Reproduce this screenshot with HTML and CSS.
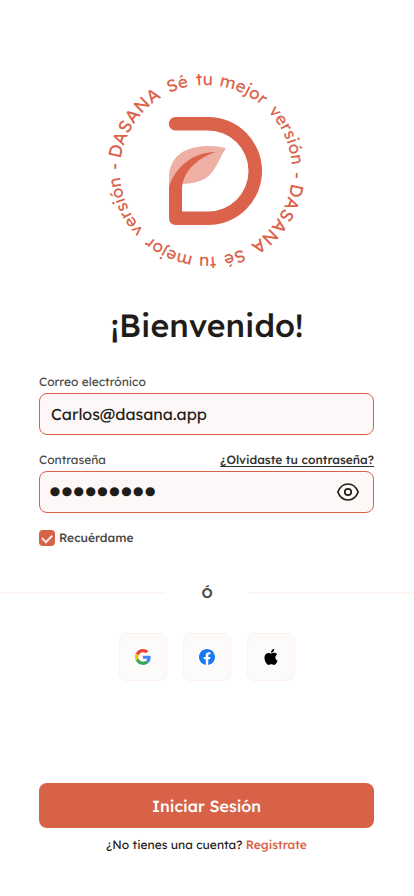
FILE: index.html
```html
<!DOCTYPE html>
<html lang="es">
<head>
<meta charset="utf-8">
<meta name="viewport" content="width=device-width, initial-scale=1">
<title>Dasana</title>
<link rel="stylesheet" href="styles.css">
</head>
<body>
<main class="page">
  <svg class="logo" viewBox="1 0 200 200" role="img" aria-label="Dasana">
    <defs>
      <path id="ring" d="M14 100A86 86 0 0 1 186 100"/>
      <g id="motto">
        <text><textPath href="#ring" startOffset="1">-</textPath></text>
        <text class="brand"><textPath href="#ring" startOffset="12">DASANA</textPath></text>
        <text><textPath href="#ring" startOffset="97">Sé</textPath></text>
        <text><textPath href="#ring" startOffset="125">tu</textPath></text>
        <text><textPath href="#ring" startOffset="148">mejor</textPath></text>
        <text><textPath href="#ring" startOffset="204">versión</textPath></text>
      </g>
    </defs>
    <use href="#motto"/>
    <use href="#motto" transform="rotate(180 100 100)"/>
    <path class="leaf" d="M63 116V104C65 84 80 75 103 75C110 75 116 76 119 77Q120 78 119 79C115 84 113 91 109 97C103 108 93 112 76 113Z"/>
    <path class="letter" d="M69.500 46H102A54 54 0 0 1 102 154H70Q63 154 63 147V116C69 97 86 81 110 81C91 87 76 101 76 119V139.500Q76 140.500 77 140.500H102A40.500 40.500 0 0 0 102 59.500H69.500A6.750 6.750 0 0 1 69.500 46Z"/>
  </svg>

  <h1 class="title">¡Bienvenido!</h1>

  <form class="form" id="login">
    <div class="field">
      <label class="label" for="email">Correo electrónico</label>
      <input class="input" id="email" type="email" value="Carlos@dasana.app">
    </div>
    <div class="field">
      <div class="row">
        <label class="label" for="password">Contraseña</label>
        <a class="forgot" href="#">¿Olvidaste tu contraseña?</a>
      </div>
      <div class="input secret">
        <input class="password" id="password" type="password" value="contrasen">
        <button class="reveal" type="button" aria-label="Mostrar contraseña">
          <svg viewBox="0 0 24 24" width="24" height="24"><path d="M1.800 12C4 6.500 8 4 12 4s8 2.500 10.200 8C20 17.500 16 20 12 20S4 17.500 1.800 12Z"/><circle cx="12" cy="12" r="3.200"/></svg>
        </button>
      </div>
    </div>
    <label class="remember"><input class="check" type="checkbox" checked>Recuérdame</label>
  </form>

  <div class="divider">Ó</div>

  <div class="social">
    <button class="provider" type="button" aria-label="Google">
      <svg viewBox="0 0 48 48" width="16" height="16"><path fill="#EA4335" d="M24 9.500c3.540 0 6.710 1.220 9.210 3.600l6.850-6.850C35.900 2.380 30.470 0 24 0 14.620 0 6.510 5.380 2.560 13.220l7.980 6.190C12.430 13.720 17.740 9.500 24 9.500z"/><path fill="#4285F4" d="M46.980 24.550c0-1.570-.15-3.090-.38-4.550H24v9.020h12.940c-.58 2.960-2.260 5.480-4.780 7.180l7.730 6c4.510-4.180 7.090-10.360 7.090-17.650z"/><path fill="#FBBC05" d="M10.530 28.590c-.48-1.450-.76-2.990-.76-4.590s.27-3.140.76-4.590l-7.980-6.190C.92 16.460 0 20.120 0 24s.92 7.540 2.560 10.780l7.970-6.190z"/><path fill="#34A853" d="M24 48c6.480 0 11.930-2.130 15.890-5.810l-7.730-6c-2.150 1.450-4.920 2.300-8.160 2.300-6.260 0-11.570-4.220-13.470-9.910l-7.980 6.190C6.510 42.620 14.620 48 24 48z"/></svg>
    </button>
    <button class="provider" type="button" aria-label="Facebook">
      <svg viewBox="0 0 24 24" width="16" height="16"><path fill="#1877F2" d="M24 12.073c0-6.627-5.373-12-12-12s-12 5.373-12 12c0 5.990 4.388 10.954 10.125 11.854v-8.385H7.078v-3.470h3.047V9.430c0-3.007 1.792-4.669 4.533-4.669 1.312 0 2.686.235 2.686.235v2.953H15.830c-1.491 0-1.956.925-1.956 1.874v2.250h3.328l-.532 3.470h-2.796v8.385C19.612 23.027 24 18.062 24 12.073z"/></svg>
    </button>
    <button class="provider" type="button" aria-label="Apple">
      <svg viewBox="0 0 24 24" width="16" height="16"><path d="M12.152 6.896c-.948 0-2.415-1.078-3.960-1.040-2.040.027-3.910 1.183-4.961 3.014-2.117 3.675-.546 9.103 1.519 12.090 1.013 1.454 2.208 3.090 3.792 3.039 1.520-.065 2.090-.987 3.935-.987 1.831 0 2.350.987 3.960.948 1.637-.026 2.676-1.480 3.676-2.948 1.156-1.688 1.636-3.325 1.662-3.415-.039-.013-3.182-1.221-3.220-4.857-.026-3.040 2.480-4.494 2.597-4.559-1.429-2.090-3.623-2.324-4.390-2.376-2-.156-3.675 1.090-4.610 1.090zM15.530 3.830c.843-1.012 1.400-2.427 1.245-3.830-1.207.052-2.662.805-3.532 1.818-.780.896-1.454 2.338-1.273 3.714 1.338.104 2.715-.688 3.559-1.701"/></svg>
    </button>
  </div>

  <footer class="footer">
    <button class="submit" type="submit" form="login">Iniciar Sesión</button>
    <p class="signup">¿No tienes una cuenta? <a class="register" href="#">Registrate</a></p>
  </footer>
</main>
</body>
</html>
```
FILE: styles.css
```css
* {
  box-sizing: border-box;
}

body {
  margin: 0;
  background: #fff;
  color: #1f1d1a;
  font-family: Lexend, Inter, sans-serif;
  font-size: 12px;
  line-height: 16px;
  text-rendering: geometricPrecision;
}

button,
input {
  font: inherit;
  color: inherit;
  margin: 0;
  text-rendering: inherit;
}

.page {
  display: flex;
  flex-direction: column;
  min-height: 100vh;
  padding: 71px 0 43px;
}

.logo {
  width: 200px;
  height: 200px;
  align-self: center;
  overflow: visible;
  fill: #db624b;
  font-size: 17px;
  font-weight: 400;
}

.brand {
  font-size: 18px;
}

.leaf {
  fill: #eeafa4;
}

.title {
  margin: 33px 0 27px;
  font-size: 32px;
  font-weight: 500;
  line-height: 43px;
  text-align: center;
}

.form {
  display: flex;
  flex-direction: column;
  gap: 17px;
  padding: 0 40px 0 39px;
}

.field {
  display: flex;
  flex-direction: column;
  gap: 3px;
}

.row {
  display: flex;
  justify-content: space-between;
}

.label {
  color: #4b4a47;
}

.forgot {
  color: #33312e;
  font-weight: 500;
  text-underline-offset: 2px;
}

.input {
  width: 100%;
  height: 42px;
  padding: 0 11px;
  border: 1px solid #d86248;
  border-radius: 8px;
  background: #fdf8f7;
  font-size: 16px;
}

.secret {
  display: flex;
  align-items: center;
  padding: 0 13px 0 9px;
}

.password {
  flex: 1;
  min-width: 0;
  height: 40px;
  padding: 0;
  border: 0;
  outline: 0;
  background: none;
  font-family: "Liberation Sans", sans-serif;
  font-size: 34px;
}

.reveal {
  display: flex;
  padding: 0;
  border: 0;
  background: none;
}

.reveal svg {
  fill: none;
  stroke: #1f1d1a;
  stroke-width: 1.7;
}

.remember {
  display: flex;
  align-items: center;
  align-self: flex-start;
  gap: 4px;
  color: #4b4a47;
  font-weight: 500;
}

.check {
  display: grid;
  place-items: center;
  width: 16px;
  height: 16px;
  appearance: none;
  border-radius: 4px;
  background: #d86248;
}

.check:checked::before {
  content: "";
  width: 8px;
  height: 5px;
  margin-bottom: 2px;
  border: solid #fbe9e5;
  border-width: 0 0 2px 2px;
  transform: rotate(-45deg);
}

.divider {
  display: flex;
  align-items: center;
  gap: 35px;
  margin: 39px 0 32px;
  color: #4b4a47;
  font-size: 14px;
  font-weight: 600;
}

.divider::before,
.divider::after {
  content: "";
  flex: 1;
  height: 2px;
  background: #fdf5f2;
}

.social {
  display: flex;
  justify-content: center;
  gap: 16px;
}

.provider {
  display: grid;
  place-items: center;
  width: 48px;
  height: 48px;
  padding: 0;
  border: 1px solid #fdf0ee;
  border-radius: 8px;
  background: #fdfbfa;
}

.footer {
  margin-top: auto;
  padding: 0 40px 0 39px;
}

.submit {
  width: 100%;
  height: 45px;
  border: 0;
  border-radius: 8px;
  background: #d86248;
  color: #fff;
  font-size: 16px;
  font-weight: 500;
}

.signup {
  margin: 9px 0 0;
  text-align: center;
}

.register {
  color: #d86248;
  font-weight: 500;
  text-decoration: none;
}
```
